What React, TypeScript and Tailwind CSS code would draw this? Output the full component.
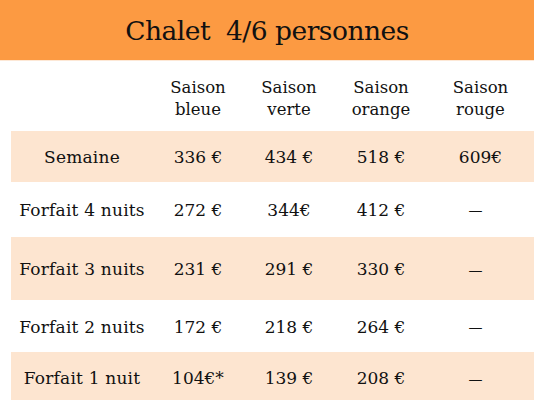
import React from "react";

const cols = "grid grid-cols-[142px_90px_92px_92px_1fr]";

const rows = [
  { label: "Semaine", values: ["336 €", "434 €", "518 €", "609€"], band: true, h: "h-[51px] pt-[2px]" },
  { label: "Forfait 4 nuits", values: ["272 €", "344€", "412 €", "—"], band: false, h: "h-[55px] pt-[2px]" },
  { label: "Forfait 3 nuits", values: ["231 €", "291 €", "330 €", "—"], band: true, h: "h-[63px] pt-[3px]" },
  { label: "Forfait 2 nuits", values: ["172 €", "218 €", "264 €", "—"], band: false, h: "h-[52px] pt-[3px]" },
  { label: "Forfait 1 nuit", values: ["104€*", "139 €", "208 €", "—"], band: true, h: "h-[48px] pt-[6px]" },
];

const seasons = [
  ["Saison", "bleue"],
  ["Saison", "verte"],
  ["Saison", "orange"],
  ["Saison", "rouge"],
];

export default function App() {
  return (
    <div className="w-[534px] h-[401px] bg-white overflow-hidden text-[#111] font-['DejaVu_Serif',Georgia,serif]">
      <div className="h-[61px] bg-[#fc9a42] border-b border-[#fde8d6] flex items-center justify-center">
        <h1 className="text-[26.5px] tracking-[-0.5px] whitespace-pre pt-[2px]">Chalet  4/6 personnes</h1>
      </div>

      <div className="pl-[11px]">
        <div className={`${cols} h-[70px] items-center text-[16.5px] leading-[22px]`}>
          <div />
          {seasons.map(([a, b], i) => (
            <div key={i} className="text-center mt-[6px]">
              <div>{a}</div>
              <div>{b}</div>
            </div>
          ))}
        </div>

        {rows.map((r) => (
          <div
            key={r.label}
            className={`${cols} ${r.h} items-center text-[17px] ${r.band ? "bg-[#fde5d0]" : "bg-white"}`}
          >
            <div className="text-center tracking-[0.2px]">{r.label}</div>
            {r.values.map((v, i) =>
              v === "—" ? (
                <div key={i} className="text-center text-[14px] pr-[10px]">
                  {v}
                </div>
              ) : (
                <div key={i} className="text-center">
                  {v}
                </div>
              )
            )}
          </div>
        ))}
      </div>
    </div>
  );
}
